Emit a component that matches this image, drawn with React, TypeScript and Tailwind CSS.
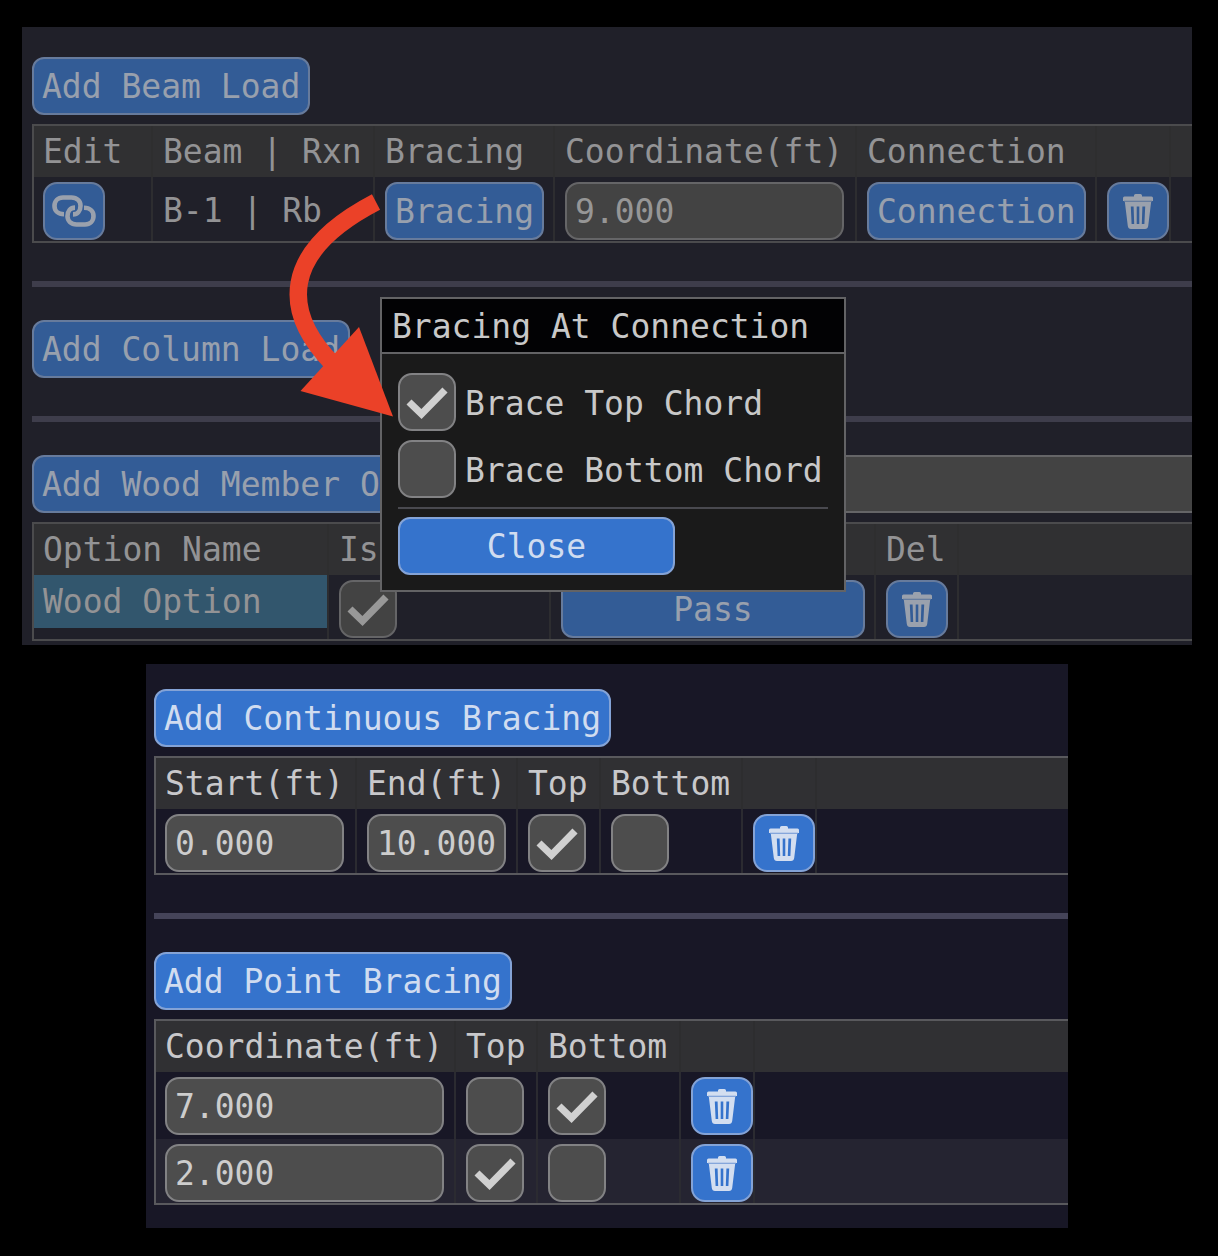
import type { ReactNode } from "react";

const FONT = "font-['DejaVu_Sans_Mono',monospace] text-[33px] leading-[50px]";

function TrashIcon() {
  return (
    <svg width="30" height="35" viewBox="0 0 30 35" aria-hidden="true">
      <path
        fill="#d3def0"
        fillRule="evenodd"
        d="M11 2.5V1.6Q11 0 12.6 0h4.8Q19 0 19 1.6v.9h9.5Q30 2.5 30 4v3H0V4q0-1.500 1.500-1.500zM1.800 7.500h26.400l-3 24.500q-.4 3-3.200 3H8q-2.800 0-3.200-3zM7.800 12.500l.8 17.500h2.600l-.6-17.500zM13.700 12.500V30h2.600V12.500zM19.400 12.500L18.800 30h2.600l.8-17.500z"
      />
      <path stroke="#86a6da" strokeWidth="1" d="M1 7.200h28" />
    </svg>
  );
}

function LinkIcon() {
  return (
    <svg width="44" height="32" viewBox="0 0 44 32" fill="none" stroke="#d3def0" strokeWidth="4.600" aria-hidden="true">
      <path d="M12 19.200C6 19.200 2.500 15.500 2.500 11 2.500 6 6 2.500 11 2.500h8.500c5.500 0 9 3.700 9 8.200 0 5-3 8.700-7.500 8.700" />
      <path d="M32 12.800c6 0 9.500 3.700 9.500 8.200 0 5-3.500 8.500-8.500 8.500h-8.500c-5.500 0-9-3.700-9-8.200 0-5 3-8.700 7.500-8.700" />
    </svg>
  );
}

function Button({ children, className = "" }: { children: ReactNode; className?: string }) {
  return (
    <button
      type="button"
      className={`block h-[58px] rounded-xl border-2 border-[#84a3d6] bg-[#3573cc] px-2 pt-0.5 whitespace-nowrap text-[#d0dcf0] ${className}`}
    >
      {children}
    </button>
  );
}

function IconButton({ label, children }: { label: string; children: ReactNode }) {
  return (
    <button
      type="button"
      aria-label={label}
      className="flex h-[58px] w-[62px] items-center justify-center rounded-[14px] border-2 border-[#84a3d6] bg-[#3573cc]"
    >
      {children}
    </button>
  );
}

function NumberField({ label, value, className }: { label: string; value: string; className: string }) {
  return (
    <input
      type="text"
      aria-label={label}
      defaultValue={value}
      className={`block h-[58px] rounded-[14px] border-2 border-[#828284] bg-[#4d4d4d] px-2 text-[#cdcdcd] ${className}`}
    />
  );
}

function Checkbox({ label, checked, showLabel }: { label: string; checked?: boolean; showLabel?: boolean }) {
  return (
    <label className="flex items-center gap-[9px]">
      <span className="grid h-[58px] w-[58px] shrink-0">
        <input
          type="checkbox"
          aria-label={label}
          defaultChecked={checked}
          className="peer col-start-1 row-start-1 h-[58px] w-[58px] appearance-none rounded-[14px] border-2 border-[#828284] bg-[#4d4d4d]"
        />
        <svg
          viewBox="0 0 58 58"
          className="pointer-events-none invisible col-start-1 row-start-1 h-[58px] w-[58px] peer-checked:visible"
          aria-hidden="true"
        >
          <path d="M11 29L23.500 41L47 17" fill="none" stroke="#d0d0d0" strokeWidth="7.200" />
        </svg>
      </span>
      {showLabel && <span className="pt-1 whitespace-nowrap text-[#c8c8c8]">{label}</span>}
    </label>
  );
}

function DataTable({ columns, children }: { columns: { name: string; width: string }[]; children: ReactNode }) {
  return (
    <table className="mt-[9px] w-full table-fixed border-separate border-spacing-0 border-2 border-r-0 border-[#59595d] text-[#c8c8cb]">
      <thead className="bg-[#303033]">
        <tr>
          {columns.map((col, i) => (
            <th
              key={i}
              className={`h-[51px] border-r-2 border-[#2d2d2f] p-0 pl-[10px] text-left font-normal whitespace-nowrap first:pl-[9px] ${col.width}`}
            >
              {col.name}
            </th>
          ))}
          <th className="p-0" />
        </tr>
      </thead>
      <tbody>{children}</tbody>
    </table>
  );
}

function Row({ children }: { children: ReactNode }) {
  return (
    <tr className="group even:bg-[#252431]">
      {children}
      <td />
    </tr>
  );
}

function Cell({ children, className = "" }: { children?: ReactNode; className?: string }) {
  return (
    <td
      className={`border-r-2 border-[#2b2b31] p-0 pt-[5px] pb-1 pl-[10px] align-top whitespace-nowrap group-last:pb-px first:pl-[9px] ${className}`}
    >
      {children}
    </td>
  );
}

function Separator() {
  return <hr className="mt-[38px] mb-[33px] h-[6px] border-0 bg-[#454459]" />;
}

function BracingDialog() {
  return (
    <div
      role="dialog"
      aria-labelledby="bracing-title"
      className="absolute top-[270px] left-[358px] w-[466px] border-2 border-[#636365] bg-[#1a1a1a]"
    >
      <h2 id="bracing-title" className="h-[55px] border-b-2 border-[#636365] bg-[#020204] pt-[3px] pl-[10px] text-[#c8c8c8]">
        Bracing At Connection
      </h2>
      <div className="px-4 pt-[19px] pb-[15px]">
        <div className="flex flex-col gap-[9px]">
          <Checkbox label="Brace Top Chord" checked showLabel />
          <Checkbox label="Brace Bottom Chord" showLabel />
        </div>
        <hr className="mt-[9px] mb-2 h-[2px] border-0 bg-[#49494f]" />
        <Button className="w-[277px]">Close</Button>
      </div>
    </div>
  );
}

function Arrow() {
  return (
    <svg
      width="110"
      height="230"
      viewBox="285 190 110 230"
      className="pointer-events-none absolute top-[163px] left-[263px]"
      aria-hidden="true"
    >
      <path d="M376 202C280 252 282 312 333 364" fill="none" stroke="#eb4128" strokeWidth="17.500" />
      <path d="M359 327L393 416.500L300.500 391z" fill="#eb4128" />
    </svg>
  );
}

function LoadsPanel() {
  return (
    <section className="relative overflow-hidden bg-[#181726] pt-[30px] pb-1 pl-[10px]">
      <Button>Add Beam Load</Button>
      <DataTable
        columns={[
          { name: "Edit", width: "w-[119px]" },
          { name: "Beam | Rxn", width: "w-[222px]" },
          { name: "Bracing", width: "w-[180px]" },
          { name: "Coordinate(ft)", width: "w-[302px]" },
          { name: "Connection", width: "w-[240px]" },
          { name: "", width: "w-[74px]" },
        ]}
      >
        <Row>
          <Cell>
            <IconButton label="Edit beam load">
              <LinkIcon />
            </IconButton>
          </Cell>
          <Cell className="leading-[58px]">B-1 | Rb</Cell>
          <Cell>
            <Button>Bracing</Button>
          </Cell>
          <Cell>
            <NumberField label="Coordinate (ft)" value="9.000" className="w-[279px]" />
          </Cell>
          <Cell>
            <Button>Connection</Button>
          </Cell>
          <Cell>
            <IconButton label="Delete beam load">
              <TrashIcon />
            </IconButton>
          </Cell>
        </Row>
      </DataTable>

      <Separator />
      <Button>Add Column Load</Button>
      <Separator />

      <div className="flex gap-[9px]">
        <Button>Add Wood Member Option</Button>
        <input
          type="text"
          aria-label="Option name"
          className="h-[58px] min-w-0 flex-1 rounded-l-[14px] border-2 border-r-0 border-[#828284] bg-[#4d4d4d] px-2"
        />
      </div>
      <DataTable
        columns={[
          { name: "Option Name", width: "w-[295px]" },
          { name: "Is", width: "w-[222px]" },
          { name: "", width: "w-[325px]" },
          { name: "Del", width: "w-[83px]" },
        ]}
      >
        <Row>
          <td className="border-r-2 border-[#2b2b31] p-0 align-top">
            <div className="h-[53px] bg-[#346a8e] pl-[9px] leading-[53px]">Wood Option</div>
          </td>
          <Cell>
            <Checkbox label="Is active" checked />
          </Cell>
          <Cell>
            <Button className="w-[304px]">Pass</Button>
          </Cell>
          <Cell>
            <IconButton label="Delete option">
              <TrashIcon />
            </IconButton>
          </Cell>
        </Row>
      </DataTable>

      {/* modal dimming */}
      <div className="absolute inset-0 bg-[#323232]/35" />
      <BracingDialog />
      <Arrow />
    </section>
  );
}

function PointRow({ value, top, bottom }: { value: string; top?: boolean; bottom?: boolean }) {
  return (
    <Row>
      <Cell>
        <NumberField label="Coordinate (ft)" value={value} className="w-[279px]" />
      </Cell>
      <Cell>
        <Checkbox label="Top" checked={top} />
      </Cell>
      <Cell>
        <Checkbox label="Bottom" checked={bottom} />
      </Cell>
      <Cell>
        <IconButton label="Delete point bracing">
          <TrashIcon />
        </IconButton>
      </Cell>
    </Row>
  );
}

function BracingPanel() {
  return (
    <section className="mx-[124px] mt-[19px] overflow-hidden bg-[#181726] pt-[25px] pb-[23px] pl-2">
      <Button>Add Continuous Bracing</Button>
      <DataTable
        columns={[
          { name: "Start(ft)", width: "w-[201px]" },
          { name: "End(ft)", width: "w-[161px]" },
          { name: "Top", width: "w-[83px]" },
          { name: "Bottom", width: "w-[142px]" },
          { name: "", width: "w-[74px]" },
        ]}
      >
        <Row>
          <Cell>
            <NumberField label="Start (ft)" value="0.000" className="w-[179px]" />
          </Cell>
          <Cell>
            <NumberField label="End (ft)" value="10.000" className="w-[139px]" />
          </Cell>
          <Cell>
            <Checkbox label="Top" checked />
          </Cell>
          <Cell>
            <Checkbox label="Bottom" />
          </Cell>
          <Cell>
            <IconButton label="Delete continuous bracing">
              <TrashIcon />
            </IconButton>
          </Cell>
        </Row>
      </DataTable>

      <Separator />

      <Button>Add Point Bracing</Button>
      <DataTable
        columns={[
          { name: "Coordinate(ft)", width: "w-[300px]" },
          { name: "Top", width: "w-[82px]" },
          { name: "Bottom", width: "w-[143px]" },
          { name: "", width: "w-[74px]" },
        ]}
      >
        <PointRow value="7.000" bottom />
        <PointRow value="2.000" top />
      </DataTable>
    </section>
  );
}

export default function App() {
  return (
    <main className={`min-h-screen bg-black pt-[27px] pr-[26px] pb-7 pl-[22px] ${FONT}`}>
      <LoadsPanel />
      <BracingPanel />
    </main>
  );
}
